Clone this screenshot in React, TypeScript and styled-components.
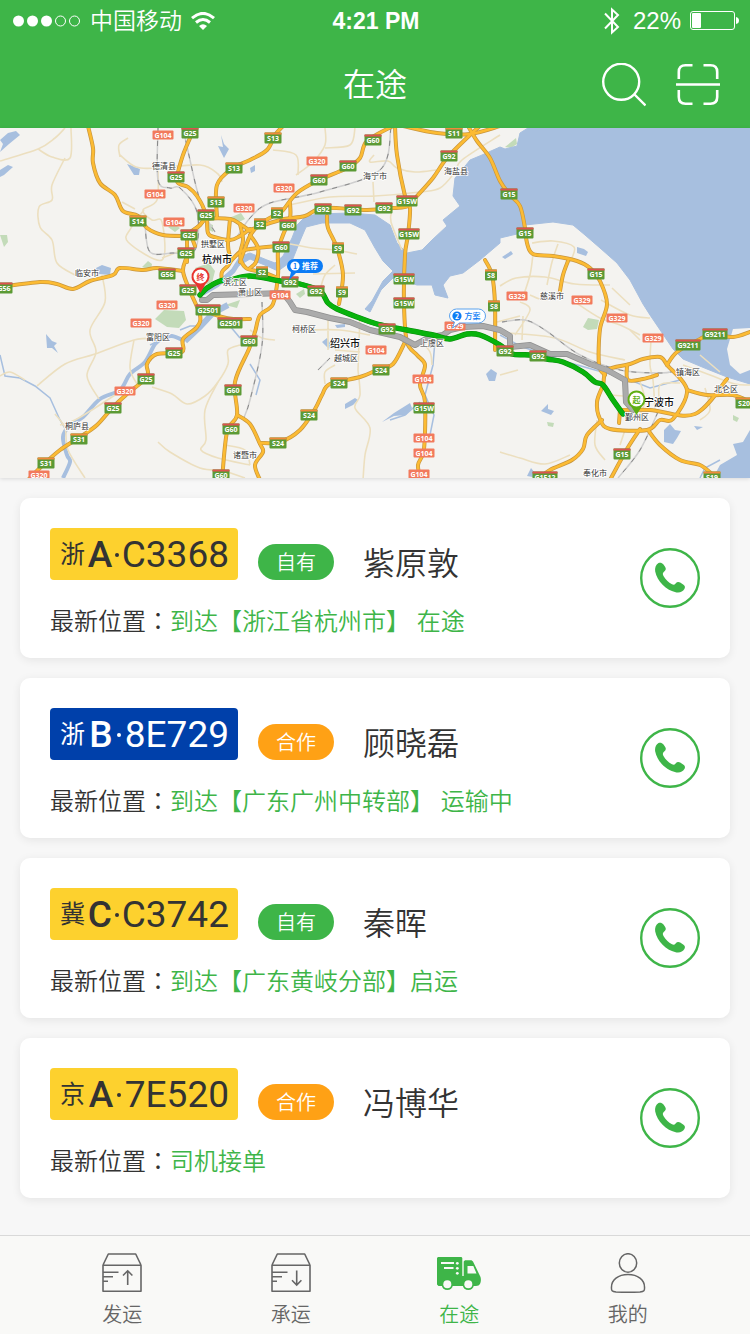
import React from "react";
import styled, { createGlobalStyle } from "styled-components";

const GREEN = "#3eb548";
const ORANGE = "#ffa115";

const GlobalStyle = createGlobalStyle`
  * { box-sizing: border-box; }
  body {
    margin: 0;
    background: #f7f7f7;
    color: #333;
    font-family: "Liberation Sans", "Noto Sans CJK SC", sans-serif;
    font-weight: 350;
  }
  h1, h2, p { margin: 0; font-weight: 350; }
`;

const Page = styled.div`
  display: flex;
  flex-direction: column;
  min-height: 100vh;
`;

/* ---------- header ---------- */

const Header = styled.header`
  background: ${GREEN};
  color: #fff;
`;

const StatusBar = styled.div`
  display: grid;
  grid-template-columns: 1fr auto 1fr;
  align-items: center;
  height: 40px;
  padding: 2px 11px 0 13px;
  font-size: 24px;
  line-height: 38px;
`;

const StatusGroup = styled.div<{ $end?: boolean }>`
  display: flex;
  align-items: center;
  gap: 9px;
  justify-content: ${(p) => (p.$end ? "flex-end" : "flex-start")};
`;

const Carrier = styled.span`
  font-size: 23px;
`;

const Clock = styled.time`
  font-size: 23px;
  font-weight: 700;
`;

const BatteryText = styled.span`
  margin-left: 4px;
`;

const TitleBar = styled.div`
  display: grid;
  grid-template-columns: 1fr auto 1fr;
  align-items: center;
  height: 88px;
  padding: 2px 30px 0;
`;

const Title = styled.h1`
  grid-column: 2;
  font-size: 32px;
  line-height: 40px;
`;

const Actions = styled.div`
  display: flex;
  justify-content: flex-end;
  gap: 30px;
`;

const IconButton = styled.button`
  display: block;
  padding: 0;
  border: 0;
  background: none;
  color: inherit;
  cursor: pointer;
  svg { display: block; }
`;

/* ---------- map ---------- */

const MapPanel = styled.section`
  box-shadow: 0 1px 4px rgba(0, 0, 0, 0.12);
`;

const MapDrawing = styled.svg`
  display: block;
  width: 100%;
  height: auto;
  background: #f4f3f0;
  font-family: "Noto Sans CJK SC", sans-serif;
`;

type Kind = "G" | "S" | "N";

const shields: [Kind, string, number, number][] = [
  ["N", "G104", 163, 135], ["G", "G25", 190, 133], ["S", "S13", 273, 138], ["G", "G60", 373, 140],
  ["S", "S11", 454, 133], ["G", "G92", 449, 156], ["G", "G25", 176, 177], ["S", "S13", 234, 168],
  ["N", "G320", 317, 161], ["G", "G60", 348, 166], ["N", "G104", 155, 194], ["N", "G320", 284, 188],
  ["G", "G60", 319, 180], ["G", "G15", 509, 194], ["S", "S14", 138, 221], ["N", "G104", 174, 222],
  ["S", "S13", 216, 202], ["G", "G25", 206, 215], ["N", "G320", 244, 208], ["S", "S2", 277, 213],
  ["S", "S2", 260, 224], ["G", "G60", 288, 225], ["G", "G92", 323, 209], ["G", "G92", 353, 210],
  ["G", "G92", 384, 208], ["G", "G15W", 407, 201], ["G", "G15W", 409, 234], ["G", "G15", 525, 233],
  ["G", "G25", 189, 235], ["G", "G25", 186, 253], ["G", "G60", 281, 247], ["S", "S9", 338, 248],
  ["G", "G56", 167, 274], ["G", "G25", 188, 290], ["S", "S2", 262, 272], ["G", "G92", 290, 282],
  ["G", "G92", 316, 291], ["S", "S9", 342, 292], ["N", "G104", 280, 295], ["G", "G15W", 404, 279],
  ["G", "G15W", 404, 303], ["S", "S8", 491, 275], ["S", "S8", 494, 306], ["G", "G15", 596, 274],
  ["N", "G329", 517, 296], ["N", "G329", 582, 300], ["N", "G329", 617, 318], ["N", "G320", 167, 305],
  ["G", "G2501", 208, 310], ["G", "G2501", 230, 323], ["N", "G320", 141, 323], ["G", "G60", 249, 341],
  ["G", "G25", 174, 353], ["G", "G25", 146, 379], ["N", "G320", 125, 391], ["G", "G25", 113, 408],
  ["S", "S31", 79, 439], ["S", "S31", 46, 463], ["N", "G320", 39, 475], ["G", "G60", 233, 390],
  ["G", "G60", 231, 429], ["G", "G60", 221, 475], ["G", "G92", 387, 329], ["G", "G92", 505, 351],
  ["G", "G92", 538, 356], ["N", "G104", 376, 350], ["N", "G104", 423, 379], ["S", "S24", 381, 370],
  ["S", "S24", 339, 383], ["S", "S24", 309, 415], ["S", "S24", 278, 443], ["G", "G15W", 424, 408],
  ["N", "G104", 424, 438], ["N", "G104", 424, 453], ["N", "G104", 419, 474], ["N", "G329", 653, 338],
  ["G", "G9211", 688, 345], ["G", "G9211", 715, 334], ["S", "S20", 744, 403], ["G", "G15", 622, 454],
  ["G", "G1512", 545, 477], ["S", "S19", 712, 477], ["G", "G56", 4, 288], ["N", "G329", 455, 326],
];

const places: [string, number, number, boolean?][] = [
  ["德清县", 164, 166], ["海宁市", 375, 176], ["海盐县", 456, 171], ["拱墅区", 213, 244],
  ["杭州市", 217, 260, true], ["临安市", 87, 273], ["滨江区", 235, 282], ["萧山区", 250, 292],
  ["慈溪市", 552, 296], ["富阳区", 158, 337], ["柯桥区", 304, 329], ["绍兴市", 345, 344, true],
  ["越城区", 346, 358], ["上虞区", 432, 343], ["桐庐县", 77, 426], ["诸暨市", 245, 455],
  ["宁波市", 659, 403, true], ["鄞州区", 637, 417], ["镇海区", 688, 372], ["北仑区", 726, 389],
  ["奉化市", 595, 473],
];

const highways = [
  "88,126 93,148 93,163 100,183 115,195 123,211 138,216 147,228 163,235 187,236",
  "190,138 182,158 177,181 188,187 197,196 205,213 200,225 188,235 187,255 183,271 190,291 200,315 197,327 183,339 182,352 157,354 147,364 147,377 127,394 113,407 97,425 80,437 60,450 43,465 28,480",
  "0,287 40,282 57,284 73,289 90,281 113,275 120,268 143,270 157,268 183,271",
  "283,126 275,135 267,150 250,160 233,168 217,185 217,218",
  "188,235 200,225 207,219 230,219 240,224 250,231",
  "207,219 208,233 214,237 230,240 240,236 250,229",
  "230,219 228,245 230,262 222,272 222,280",
  "230,262 240,252 250,249 278,246",
  "240,224 243,240 240,255 246,268 262,272 278,278",
  "192,238 195,246 M187,255 187,262",
  "393,126 367,141 360,158 347,168 317,181 297,193 283,210 277,214 260,224 250,236 240,262",
  "250,230 280,220 305,216 323,208 367,210 393,208 408,206 417,196 433,178 447,158 470,135 480,126",
  "403,126 437,133 470,134 500,126",
  "468,126 477,141 490,158 500,181 510,195 520,206 525,228 527,243 533,254 553,256 577,261 590,268 600,281 607,304 600,329 599,365 605,375",
  "395,126 397,155 405,196 410,208 408,235 405,255 404,304 407,342 417,355 425,365 420,385 425,402 424,449 418,465 421,480",
  "405,342 393,364 377,370 360,377 330,384 322,395 315,409 300,430 280,442 260,443",
  "290,203 290,218 283,235 278,251 278,275 273,304 260,315 255,332 249,349 235,382 237,415 227,432 222,480",
  "237,415 250,424 260,444 263,452 255,465 260,480",
  "200,309 222,317 235,319 250,319",
  "250,235 258,248 256,262 250,268",
  "327,216 328,228 337,248 343,275 339,304",
  "485,260 492,275 495,304 495,350",
  "568,261 563,275 560,291",
  "667,365 660,357 643,359 630,364 607,370 603,385 597,402 600,419 610,429 647,430 660,420 673,419 687,390 667,365",
  "667,365 677,352 700,339 713,334 733,337 750,332",
  "687,390 707,395 733,395 750,402",
  "727,379 695,414 650,410 620,410",
  "602,420 587,435 583,449 572,460 550,470 540,478",
  "640,429 627,449 610,480",
  "648,430 660,445 680,460 700,465 713,475",
  "627,365 628,380 643,379 657,375",
  "620,410 619,423",
];

const minorRoads = [
  "0,161 38,149 55,138 65,128", "38,149 52,157 70,158 71,128", "65,158 52,185 52,200 39,207 40,227 52,240 57,263 75,275",
  "102,275 105,302 90,330 96,352 87,376 99,399", "120,157 119,145 128,138 M120,155 136,167 157,168 200,165 218,174 222,182",
  "158,168 157,200 143,210 152,220 162,222 162,260 128,242 131,228 144,210", "122,202 135,209 M162,258 183,250",
  "37,386 65,364 95,354 134,340 157,338 M134,340 130,368 137,384", "152,387 172,394 187,404 205,396 218,382 228,364 228,350 240,345",
  "218,382 205,410 206,440 201,450 218,458 250,465", "158,442 170,452 200,468 222,470",
  "273,150 296,155 298,175", "296,175 313,162 325,145 325,128 M325,148 350,145 355,128", "374,155 370,162 388,161 397,168 415,172 436,170",
  "290,205 330,197 375,196 420,192 440,188 455,172 462,160 500,135", "373,182 374,202 M392,210 391,222 402,250",
  "290,244 312,248 335,250 357,254 M313,274 355,273 M320,290 325,275 335,265",
  "310,330 340,330 370,335 M328,315 328,350 M360,315 358,370 M335,350 360,352 M325,384 325,372 335,365",
  "358,370 360,395 355,408 370,428 365,455 363,480", "250,330 262,338 275,340 M420,340 430,352 432,365",
  "532,243 553,241 574,247 570,262 M533,254 530,275 522,300 M500,286 516,278 545,277 575,284 610,285 M558,244 552,262 547,285",
  "560,291 545,300 530,295 M575,302 600,318 620,325 640,335 M601,300 630,315 650,318 M612,288 630,305",
  "520,302 530,310 515,335 M497,322 520,316 M523,316 522,340 M510,333 555,338 590,352 625,360 M500,375 518,370",
  "500,452 520,458 545,464 570,455 M597,420 595,445 605,460", "651,340 650,365 653,380 655,410",
  "630,330 640,340 M683,365 710,375 735,384 750,385 M705,388 710,410 700,420 M700,355 720,372",
  "625,430 620,445 M640,382 645,400 640,415 M610,395 650,398 M660,405 660,385 680,383",
  "0,376 10,372 25,380 M55,414 65,428 68,450 85,478", "60,425 75,420 95,408 115,395",
  "222,470 245,478 M225,445 245,450 250,465",
];

const railways = [
  "158,128 158,180 170,188 180,188 197,212 195,250 172,253 150,252 145,225",
  "183,128 190,160 197,190 205,215 215,232", "391,128 380,170 320,192 270,203 250,218 235,240",
  "262,302 262,345 250,400 243,420", "502,322 525,320 545,330 580,355 620,370 660,373 675,371",
  "658,412 640,450 618,478", "318,370 330,358",
];

const streams = [
  "0,355 5,376 20,378 35,386 50,398 60,420 66,430", "500,335 520,346 560,360 595,370 625,378 650,388 680,380",
  "435,340 433,365 425,395 434,415 430,435", "420,402 405,415 390,420", "230,326 240,338",
  "165,338 150,345 M180,330 190,326 200,326", "700,478 705,468 720,460", "250,364 260,380 256,395",
];

const sea =
  "M528 128 L520 133 517 146 505 149 500 147 482 155 470 160 462 170 455 178 453 196 460 206 443 220 447 226 432 240 422 250 407 253 397 243 390 225 375 215 350 213 317 214 305 217 297 225 292 238 283 256 275 263 267 260 250 253 240 257 233 269 250 259 267 266 278 271 292 261 300 241 306 227 322 223 350 223 365 230 375 248 383 261 393 271 383 281 372 301 365 309 370 312 381 290 393 278 417 285 432 285 435 295 448 298 443 285 450 276 463 273 480 260 500 243 500 238 517 234 525 225 553 222 573 225 585 235 600 248 617 263 630 280 643 304 650 315 673 349 683 359 707 369 727 377 750 384 V128Z";

const greenRoute =
  "200,295 207,288 220,281 230,280 250,276 280,281 300,284 320,291 328,303 337,309 357,317 377,324 407,330 433,335 450,339 467,334 480,335 500,345 512,354 530,355 547,359 563,362 583,372 595,382 603,385 613,400 623,414";

const greyRoute =
  "202,300 207,300 213,295 250,294 283,293 290,302 295,310 307,312 330,318 350,322 370,330 400,337 415,345 430,337 443,335 450,330 463,327 483,326 500,330 510,336 510,347 530,345 550,354 567,354 590,364 607,370 625,380 626,402 633,410";

const toPath = (points: string) => "M" + points;

/* Rounds a list of points into a curve that still passes through each of them. */
const toCurve = (points: string) =>
  points
    .split("M")
    .map((part) => {
      const p = part.trim().split(" ").map((pair) => pair.split(",").map(Number));
      let d = `M${p[0]}`;
      for (let i = 0; i < p.length - 1; i++) {
        const before = p[i - 1] ?? p[i];
        const after = p[i + 2] ?? p[i + 1];
        const c1 = [0, 1].map((k) => p[i][k] + (p[i + 1][k] - before[k]) / 6);
        const c2 = [0, 1].map((k) => p[i + 1][k] - (after[k] - p[i][k]) / 6);
        d += `C${c1} ${c2} ${p[i + 1]}`;
      }
      return d;
    })
    .join("");

function Shield({ kind, label, x, y }: { kind: Kind; label: string; x: number; y: number }) {
  const w = label.length * 4 + (label.length > 2 ? 5 : 4);
  const h = kind === "N" ? 9 : 11;
  return (
    <g>
      <rect x={x - w / 2} y={y - h / 2} width={w} height={h} rx="1" fill={kind === "N" ? "#f27a5c" : "#5b9a35"} />
      {kind !== "N" && (
        <rect x={x - w / 2} y={y - h / 2} width={w} height="2" fill={kind === "G" ? "#dd5350" : "#f08a3c"} />
      )}
      <text
        x={x}
        y={y + (kind === "N" ? 2.5 : 3.3)}
        textAnchor="middle"
        fontSize="7"
        fontWeight="700"
        fontFamily="Open Sans, Noto Sans, sans-serif"
        fill="#fff"
      >
        {label}
      </text>
    </g>
  );
}

function RouteMap() {
  return (
    <MapDrawing viewBox="0 128 750 350" role="img" aria-label="路线地图">
      <path
        fill="#c3dbb9"
        d="M155 319 l9-9 20 1 2 9-7 8-12-1z M195 268 l14-5 6 8-3 12-14 3z M0 235 l7 0 1 7-4 5z M142 267 l6-6 4 3-1 6z M168 227 l6-3 6 4-5 4z M505 147 l11-9 1 6-6 4z M583 327 l5-9 11 2-2 9-9 1z M296 294 l8-5 1 5-5 4z M229 218 l12-5 4 6-8 4z M547 422 l7 1-1 4-5-1z M733 415 l6 3-2 4-4-2z M205 222 l8 3 0 7-6-3z M225 305 l15-5-3 8z"
      />
      <path d={sea} fill="#a7bfdf" stroke="#a7bfdf" strokeLinejoin="round" />
      <path d="M733 329 L727 349 730 365 740 374 750 370 V328Z" fill="#f4f3f0" />
      <path d="M750 430 743 442 733 444 737 455 720 465 713 478 750 478Z" fill="#a7bfdf" />
      <path
        fill="#a7bfdf"
        d="M0 140 l8-7 8-2 4 4-11 9-9 8 3-8z M0 170 l8-5 5 2-9 8-4 2z M127 164 l6 2 7 3-1 6-5 0z M218 146 l5 1-2-12 3 9 5 5-5 9-3-6z M96 268 l6-3 9 3-1 7-12-1z M46 334 l6 7 5 2-3 3 4 7-6-5-5 0z M345 404 l10-6 3 2-5 5-8 4z M382 422 l12-9 16-10 2 5-6 7-12 1z M322 342 l5-4 4 6-2 5z M335 325 l10-1 0 3-8 1z M486 374 l5-5 6 4-2 8-6 0z M664 430 l6-6 5 6 6 1-4 7-4 6-9-2z M541 411 l7-7 0 5 6 2-3 4z M502 257 l9-6 2 3-8 5z M577 247 l7 2 4 3-2 4-9-3z M694 426 l9 1-6 3z M250 168 l5-3 0 6-4 2z M527 476 l4-8 4 5 3 5z"
      />
      <path d="M250 255 240 260 233 271 217 285 203 293" fill="none" stroke="#a7bfdf" strokeWidth="5" />
      <path d="M228 305 213 313 200 327 185 341" fill="none" stroke="#a7bfdf" strokeWidth="6" />
      <path
        d={toCurve("185,341 172,336 163,338 155,344 145,362 130,374 120,390 100,399 83,417 70,425 63,437 67,455 70,462 63,478")}
        fill="none"
        stroke="#a7bfdf"
        strokeWidth="4"
      />
      {streams.map((p) => (
        <path key={p} d={toPath(p)} fill="none" stroke="#a7bfdf" strokeWidth="1.5" />
      ))}
      {minorRoads.map((p) => (
        <path key={p} d={toCurve(p)} fill="none" stroke="#ecdfbf" strokeWidth="1.6" strokeLinejoin="round" />
      ))}
      {railways.map((p) => (
        <g key={p} fill="none">
          <path d={toCurve(p)} stroke="#cfcfcf" strokeWidth="1.5" />
          <path d={toCurve(p)} stroke="#888" strokeWidth="1" strokeDasharray="5 8" />
        </g>
      ))}
      <g fill="none" strokeLinejoin="round" strokeLinecap="round">
        {highways.map((p) => (
          <path key={p} d={toCurve(p)} stroke="#c8963e" strokeWidth="4" />
        ))}
        {highways.map((p) => (
          <path key={p} d={toCurve(p)} stroke="#fcbb33" strokeWidth="2.6" />
        ))}
        <path d={toPath(greyRoute)} stroke="#8f8f8f" strokeWidth="6" />
        <path d={toPath(greyRoute)} stroke="#ababab" strokeWidth="4.6" />
        <path d={toCurve(greenRoute)} stroke="#078a0b" strokeWidth="5.4" />
        <path d={toCurve(greenRoute)} stroke="#08b30c" strokeWidth="4.4" />
      </g>
      {shields.map(([kind, label, x, y]) => (
        <Shield key={`${label}-${x}-${y}`} kind={kind} label={label} x={x} y={y} />
      ))}
      {places.map(([name, x, y, city]) => (
        <text
          key={name}
          x={x}
          y={y + 3}
          textAnchor="middle"
          fontSize={city ? 10 : 8}
          fontWeight={city ? 500 : 400}
          fill={city ? "#111" : "#333"}
          stroke="#fff"
          strokeWidth="1.5"
          paintOrder="stroke"
        >
          {name}
        </text>
      ))}

      <path d="M287 266 a7 7 0 0 1 7-7 h22 a7 7 0 0 1 0 14 h-20 l-7 7 2-8 a7 7 0 0 1-4-6z" fill="#0c7cf5" />
      <circle cx="295" cy="266" r="4.6" fill="#fff" />
      <text x="295" y="268.7" textAnchor="middle" fontSize="7" fontWeight="700" fill="#0c7cf5">1</text>
      <text x="310" y="269" textAnchor="middle" fontSize="8" fontWeight="700" fill="#fff">推荐</text>

      <path
        d="M449.5 316 a7 7 0 0 1 7-7 h22 a7 7 0 0 1 0 14 h-19 l-7 5 2-6 a7 7 0 0 1-5-6z"
        fill="#fff"
        stroke="#5ba2ee"
      />
      <circle cx="457" cy="316" r="4.6" fill="#0c7cf5" />
      <text x="457" y="318.7" textAnchor="middle" fontSize="7" fontWeight="700" fill="#fff">2</text>
      <text x="472.5" y="319" textAnchor="middle" fontSize="8" fontWeight="500" fill="#0c7cf5">方案</text>

      <path d="M200.5 293 L195.500 284 A9 9 0 1 1 205.5 284Z" fill="#e8352e" />
      <circle cx="200.5" cy="276.5" r="7" fill="#fff" />
      <text x="200.5" y="279.5" textAnchor="middle" fontSize="8" fontWeight="700" fill="#e8352e">终</text>

      <path d="M636.5 415 L631.5 407 A9 9 0 1 1 641.5 407Z" fill="#5fae12" />
      <circle cx="636.5" cy="399.5" r="7" fill="#fff" />
      <text x="636.5" y="402.5" textAnchor="middle" fontSize="8" fontWeight="700" fill="#5fae12">起</text>
    </MapDrawing>
  );
}

/* ---------- trucks ---------- */

const TruckList = styled.ul`
  display: flex;
  flex-direction: column;
  gap: 20px;
  margin: 0;
  padding: 20px;
  list-style: none;
`;

const TruckCard = styled.li`
  display: flex;
  align-items: center;
  justify-content: space-between;
  padding: 24px 30px;
  border-radius: 10px;
  background: #fff;
  box-shadow: 0 2px 10px rgba(0, 0, 0, 0.08);
`;

const TruckInfo = styled.div`
  display: flex;
  flex-direction: column;
  gap: 30px;
  padding-top: 6px;
`;

const TruckHead = styled.div`
  display: flex;
  align-items: flex-end;
  gap: 20px;
`;

const Plate = styled.div<{ $blue?: boolean }>`
  display: flex;
  align-items: center;
  justify-content: space-between;
  width: 188px;
  height: 52px;
  padding: 2px 9px 0 10px;
  border-radius: 4px;
  background: ${(p) => (p.$blue ? "#0040aa" : "#fdd12e")};
  color: ${(p) => (p.$blue ? "#fff" : "#333")};
  font-family: Roboto, "Noto Sans CJK SC", sans-serif;
  font-size: 37px;
  font-weight: 400;
  line-height: 50px;
`;

const Province = styled.span`
  font-size: 25px;
  line-height: 48px;
`;

const CityLetter = styled.span`
  font-weight: 500;
`;

const Separator = styled.span`
  width: 4px;
  height: 4px;
  border-radius: 2px;
  background: currentColor;
`;

const Ownership = styled.span<{ $partner?: boolean }>`
  width: 76px;
  padding-top: 2px;
  border-radius: 18px;
  background: ${(p) => (p.$partner ? ORANGE : GREEN)};
  color: #fff;
  font-size: 20px;
  line-height: 34px;
  text-align: center;
`;

const Driver = styled.h2`
  margin-left: 9px;
  font-size: 32px;
  line-height: 32px;
`;

const Location = styled.p`
  font-size: 24px;
  line-height: 24px;
`;

const Colon = styled.span`
  font-family: "Noto Sans CJK TC", sans-serif;
  line-height: 0;
`;

const Place = styled.span`
  color: ${GREEN};
`;

const CallButton = styled(IconButton)`
  color: ${GREEN};
`;

const trucks = [
  { province: "浙", letter: "A", number: "C3368", blue: false, partner: false, driver: "紫原敦", place: "到达【浙江省杭州市】 在途" },
  { province: "浙", letter: "B", number: "8E729", blue: true, partner: true, driver: "顾晓磊", place: "到达【广东广州中转部】 运输中" },
  { province: "冀", letter: "C", number: "C3742", blue: false, partner: false, driver: "秦晖", place: "到达【广东黄岐分部】启运" },
  { province: "京", letter: "A", number: "7E520", blue: false, partner: true, driver: "冯博华", place: "司机接单" },
];

/* ---------- tab bar ---------- */

const TabBar = styled.nav`
  position: sticky;
  bottom: 0;
  display: flex;
  margin-top: auto;
  padding: 0 38px;
  border-top: 1px solid #d9d9d9;
  background: #f9f9f7;
`;

const Tab = styled.a<{ $active?: boolean }>`
  flex: 1;
  display: flex;
  flex-direction: column;
  align-items: center;
  gap: 10px;
  padding: 17px 0 7px;
  color: ${(p) => (p.$active ? GREEN : "#666")};
  font-size: 20px;
  line-height: 24px;
  text-decoration: none;
  svg { display: block; }
`;

const BoxIcon = ({ down }: { down?: boolean }) => (
  <svg width="40" height="40" viewBox="0 0 40 40" fill="none" stroke="currentColor" strokeWidth="1.6">
    <path d="M1 12 L6.3 1 H33.7 L39 12 M1 12.3 H39 V38.2 H1Z" strokeLinejoin="round" />
    <path d="M1 19.3 H16.5 M1 23.8 H11 M1 28.3 H6" />
    {down ? (
      <path d="M25.7 17.5 V32 M21 27.3 L25.7 32 30.4 27.3" />
    ) : (
      <path d="M25.7 32 V17.8 M21 22.5 L25.7 17.8 30.4 22.5" />
    )}
  </svg>
);

const TruckIcon = () => (
  <svg width="44" height="40" viewBox="0 -4 44 40">
    <path
      d="M1 0 H24.5 L25.3 1 V19 H26.7 V4.5 L28 3.3 H34.5 L36 4.5 L43.5 20 Q44.500 24 43 27 Q42 29 39 29 H1.5 L0 27.5 V1Z"
      fill="currentColor"
    />
    <circle cx="10.3" cy="27.5" r="5.6" fill="currentColor" />
    <circle cx="31.3" cy="27.5" r="5.6" fill="currentColor" />
    <g fill="#f9f9f7">
      <circle cx="10.3" cy="27.3" r="4" />
      <circle cx="31.3" cy="27.3" r="4" />
      <path d="M30.5 9 H36.3 L39.5 16.5 H30.5Z" />
      <path d="M4 5 H17 V7 H4Z M7 10 H16.5 V12 H7Z" />
      <circle cx="20.3" cy="6.3" r="1.4" />
      <circle cx="20.3" cy="11.3" r="1.4" />
      <circle cx="20.3" cy="16.3" r="1.4" />
    </g>
  </svg>
);

const UserIcon = () => (
  <svg width="40" height="40" viewBox="0 0 40 40" fill="none" stroke="currentColor" strokeWidth="1.5">
    <ellipse cx="20" cy="10" rx="8.7" ry="9.3" />
    <path d="M3.5 34 C3.5 27 10 21.5 20 21.5 S36.5 27 36.5 34 C36.8 37.8 36 38.5 32 38.9 Q20 39.5 8 38.9 C4 38.5 3.2 37.8 3.5 34Z" />
  </svg>
);

const tabs = [
  { label: "发运", icon: <BoxIcon /> },
  { label: "承运", icon: <BoxIcon down /> },
  { label: "在途", icon: <TruckIcon />, active: true },
  { label: "我的", icon: <UserIcon /> },
];

export default function App() {
  return (
    <Page>
      <GlobalStyle />
      <Header>
        <StatusBar>
          <StatusGroup>
            <svg width="68" height="12" viewBox="0 0 68 12" fill="#fff">
              {[5.5, 19.5, 33.5].map((cx) => (
                <circle key={cx} cx={cx} cy="6" r="5.5" />
              ))}
              {[47.5, 61.5].map((cx) => (
                <circle key={cx} cx={cx} cy="6" r="5" fill="none" stroke="#fff" />
              ))}
            </svg>
            <Carrier>中国移动</Carrier>
            <svg width="24" height="18" viewBox="0 0 24 18" fill="none" stroke="#fff" strokeWidth="3">
              <path d="M1 6.2 Q12-3.4 23 6.2" />
              <path d="M5 10.5 Q12 4.5 19 10.5" />
              <path d="M12 18 L8 14 Q12 10.6 16 14Z" fill="#fff" stroke="none" />
            </svg>
          </StatusGroup>
          <Clock>4:21 PM</Clock>
          <StatusGroup $end>
            <svg width="16" height="28" viewBox="0 0 16 28" fill="none" stroke="#fff" strokeWidth="2">
              <path d="M1 6.5 L14 20 L8 25.5 V2.5 L14 8 L1 21.5" />
            </svg>
            <BatteryText>22%</BatteryText>
            <svg width="49" height="20" viewBox="0 0 49 20">
              <rect x="0.5" y="0.5" width="44" height="18" rx="2.5" fill="none" stroke="#fff" />
              <rect x="2" y="2" width="9" height="15" rx="1" fill="#fff" />
              <path d="M46 6 Q49 6.5 49 9.5 Q49 12.5 46 13Z" fill="#fff" />
            </svg>
          </StatusGroup>
        </StatusBar>
        <TitleBar>
          <Title>在途</Title>
          <Actions>
            <IconButton aria-label="搜索">
              <svg width="44" height="44" viewBox="0 0 44 44" fill="none" stroke="#fff" strokeWidth="2.4">
                <circle cx="19.2" cy="18.8" r="18" />
                <path d="M32 31 L43.5 42.5" />
              </svg>
            </IconButton>
            <IconButton aria-label="扫一扫">
              <svg width="44" height="44" viewBox="0 0 44 44" fill="none" stroke="#fff" strokeWidth="2.6">
                <path d="M2.8 16 V9 Q2.8 2.3 9.5 2.3 H16.5 M27.5 2.3 H34.5 Q41.2 2.3 41.2 9 V16 M2.8 27 V34 Q2.8 40.7 9.5 40.7 H16.5 M27.5 40.7 H34.5 Q41.2 40.7 41.2 34 V27 M0 21.5 H44" />
              </svg>
            </IconButton>
          </Actions>
        </TitleBar>
      </Header>

      <MapPanel>
        <RouteMap />
      </MapPanel>

      <TruckList>
        {trucks.map((t) => (
          <TruckCard key={t.driver}>
            <TruckInfo>
              <TruckHead>
                <Plate $blue={t.blue}>
                  <Province>{t.province}</Province>
                  <CityLetter>{t.letter}</CityLetter>
                  <Separator />
                  <span>{t.number}</span>
                </Plate>
                <Ownership $partner={t.partner}>{t.partner ? "合作" : "自有"}</Ownership>
                <Driver>{t.driver}</Driver>
              </TruckHead>
              <Location>
                最新位置<Colon>：</Colon>
                <Place>{t.place}</Place>
              </Location>
            </TruckInfo>
            <CallButton aria-label={`呼叫${t.driver}`}>
              <svg width="60" height="60" viewBox="0 0 60 60">
                <circle cx="30" cy="30" r="28.8" fill="none" stroke="currentColor" strokeWidth="2.4" />
                <path
                  fill="currentColor"
                  d="M18.5 15 C20 14.3 22 14.6 23.5 16.5 L25.2 19 C26.5 21 25.5 22.7 24 23.8 C22.5 25 22.6 26.5 23.5 28 C25.5 31.5 28.5 34.3 32 36.3 C33.6 37.2 34.6 36.8 35.6 35.4 C36.8 34 38.6 33.7 40.2 34.6 L43.5 36.8 C45.2 38 45.3 39.6 44.4 41 C42.8 43.6 40 45 36.5 44.4 C26 42.5 17 33 15.2 23.5 C14.6 20 15.8 16.5 18.5 15Z"
                />
              </svg>
            </CallButton>
          </TruckCard>
        ))}
      </TruckList>

      <TabBar>
        {tabs.map((t) => (
          <Tab key={t.label} href="#" $active={t.active} aria-current={t.active ? "page" : undefined}>
            {t.icon}
            {t.label}
          </Tab>
        ))}
      </TabBar>
    </Page>
  );
}
